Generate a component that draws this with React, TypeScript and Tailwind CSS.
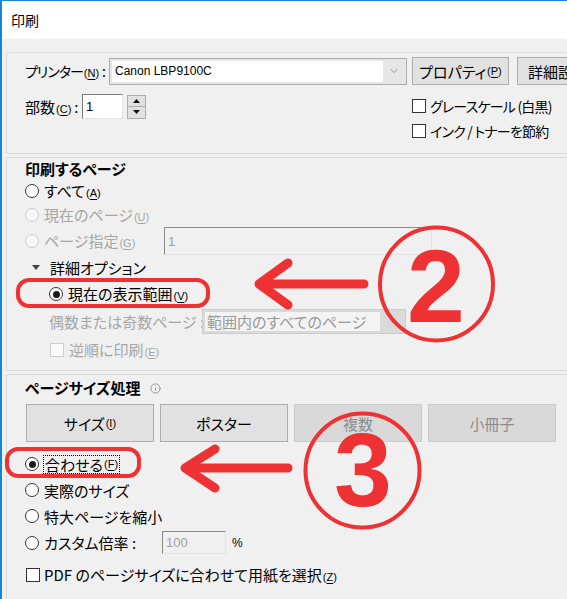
import React from "react";
import { ChevronDown, Info } from "lucide-react";

const RED = "#ee3233";

function Acc({ k }: { k: string }) {
  return (
    <span className="font-['Liberation_Sans',sans-serif] text-[11px] tracking-normal ml-[1px]">
      (<span className="underline underline-offset-[2px]">{k}</span>)
    </span>
  );
}

function Radio({ checked, disabled }: { checked?: boolean; disabled?: boolean }) {
  return (
    <span
      className={
        "flex h-[14px] w-[14px] shrink-0 items-center justify-center rounded-full border " +
        (disabled ? "border-[#cccccc] bg-[#f7f7f7]" : "border-[#333333] bg-white")
      }
    >
      {checked && <span className="h-[7px] w-[7px] rounded-full bg-[#1a1a1a]" />}
    </span>
  );
}

function Check({ disabled }: { disabled?: boolean }) {
  return (
    <span
      className={
        "block h-[14px] w-[14px] shrink-0 border " +
        (disabled ? "border-[#cccccc] bg-[#fafafa]" : "border-[#333333] bg-white")
      }
    />
  );
}

function Btn({ children, w, disabled }: { children: React.ReactNode; w: string; disabled?: boolean }) {
  return (
    <div
      className={
        "flex h-full shrink-0 items-center justify-center whitespace-nowrap border " +
        w +
        " " +
        (disabled ? "border-[#cccccc] bg-[#d9d9d9] text-[#8c8c8c]" : "border-[#adadad] bg-[#e1e1e1] text-black")
      }
    >
      {children}
    </div>
  );
}

export default function App() {
  return (
    <div className="relative h-[599px] w-[567px] overflow-hidden">
      <div className="h-[599px] w-[567px] border-l-2 border-t border-[#1883d7] bg-[#f0f0f0] font-['Noto_Sans_CJK_JP',sans-serif] text-[15px] leading-none text-black [font-feature-settings:'palt']">
        {/* title bar */}
        <div className="flex h-[38px] items-center bg-white pl-[9px] text-[14px]">印刷</div>

        <div className="pl-[4px] pt-[13px]">
          {/* Panel 1 */}
          <div className="h-[102px] w-[620px] border border-[#dcdcdc] pl-[18px] pt-[4px]">
            <div className="flex h-[28px] items-center">
              <div className="w-[84px] whitespace-nowrap text-[14px]">
                <span className="tracking-[-1px]">プリンター</span>
                <Acc k="N" />
                <span className="ml-[3px]">:</span>
              </div>
              <div className="flex h-[27px] w-[298px] items-center border border-[#adadad] bg-[#e6e6e6] px-[2px]">
                <div className="flex h-[21px] w-[271px] items-center bg-white pl-[3px] font-['Liberation_Sans',sans-serif] text-[12px]">
                  Canon LBP9100C
                </div>
                <div className="flex flex-1 justify-center">
                  <ChevronDown size={12} strokeWidth={1.2} color="#606060" />
                </div>
              </div>
              <div className="ml-[5px] h-[28px]">
                <Btn w="w-[97px]">
                  プロパティ<Acc k="P" />
                </Btn>
              </div>
              <div className="ml-[8px] h-[28px]">
                <Btn w="w-[82px]">詳細設定</Btn>
              </div>
            </div>
            <div className="mt-[9px] flex items-start">
              <div className="flex h-[25px] items-center">
                <div className="w-[57px] whitespace-nowrap">
                  部数<Acc k="C" />
                  <span className="ml-[3px]">:</span>
                </div>
                <div className="flex h-[25px] w-[41px] items-center border border-b-[#e3e3e3] border-l-[#7a7a7a] border-r-[#e3e3e3] border-t-[#7a7a7a] bg-white pl-[3px] font-['Liberation_Sans',sans-serif] text-[13px]">
                  1
                </div>
                <div className="ml-[4px] flex h-[24px] w-[19px] flex-col">
                  <div className="flex h-[12px] items-center justify-center border border-[#adadad] bg-[#e1e1e1]">
                    <svg width="7" height="4" viewBox="0 0 7 4">
                      <polygon points="3.5,0 7,4 0,4" fill="#111" />
                    </svg>
                  </div>
                  <div className="flex h-[12px] items-center justify-center border border-t-0 border-[#adadad] bg-[#e1e1e1]">
                    <svg width="7" height="4" viewBox="0 0 7 4">
                      <polygon points="0,0 7,0 3.5,4" fill="#111" />
                    </svg>
                  </div>
                </div>
              </div>
              <div className="ml-[266px] mt-[4px] flex flex-col gap-[9px] text-[14px] tracking-[-0.8px]">
                <div className="flex h-[16px] items-center gap-[4px] whitespace-nowrap">
                  <Check />
                  グレースケール (白黒)
                </div>
                <div className="flex h-[16px] items-center gap-[4px] whitespace-nowrap">
                  <Check />
                  インク / トナーを節約
                </div>
              </div>
            </div>
          </div>

          {/* Panel 2 */}
          <div className="mt-[3px] h-[214px] w-[620px] border border-[#dcdcdc] pl-[18px]">
            <div className="flex h-[20px] items-center font-bold">印刷するページ</div>
            <div className="mt-[3px] flex h-[20px] items-center gap-[5px]">
              <Radio />
              <span>
                すべて<Acc k="A" />
              </span>
            </div>
            <div className="mt-[4px] flex h-[20px] items-center gap-[5px] text-[#a6a6a6]">
              <Radio disabled />
              <span>
                現在のページ<Acc k="U" />
              </span>
            </div>
            <div className="mt-[2px] flex h-[28px] items-center">
              <div className="flex w-[139px] items-center gap-[5px] text-[#a6a6a6]">
                <Radio disabled />
                <span>
                  ページ指定<Acc k="G" />
                </span>
              </div>
              <div className="flex h-[28px] w-[268px] items-center border border-b-[#e3e3e3] border-l-[#8a8a8a] border-r-[#e3e3e3] border-t-[#8a8a8a] bg-[#f0f0f0] pl-[3px] font-['Liberation_Sans',sans-serif] text-[13px] text-[#a0a0a0]">
                1
              </div>
            </div>
            <div className="mt-[2px] flex h-[20px] items-center pl-[7px]">
              <svg width="8" height="5" viewBox="0 0 8 5">
                <polygon points="0,0 8,0 4,5" fill="#444" />
              </svg>
              <span className="ml-[10px]">詳細オプション</span>
            </div>
            <div className="mt-[7px] flex h-[20px] items-center gap-[5px] pl-[24px]">
              <Radio checked />
              <span>
                現在の表示範囲<Acc k="V" />
              </span>
            </div>
            <div className="mt-[5px] flex h-[25px] items-center pl-[24px]">
              <div className="w-[153px] whitespace-nowrap text-[#a6a6a6]">偶数または奇数ページ :</div>
              <div className="flex h-[25px] w-[204px] items-center border border-[#cccccc] bg-[#dadada] px-[2px]">
                <div className="flex h-[19px] w-[175px] items-center bg-[#f3f3f3] pl-[2px] text-[#999999]">
                  範囲内のすべてのページ
                </div>
                <div className="flex flex-1 justify-center">
                  <ChevronDown size={10} strokeWidth={1.2} color="#b0b0b0" />
                </div>
              </div>
            </div>
            <div className="mt-[6px] flex h-[20px] items-center gap-[5px] pl-[25px] text-[#a6a6a6]">
              <Check disabled />
              <span>
                逆順に印刷<Acc k="E" />
              </span>
            </div>
          </div>

          {/* Panel 3 */}
          <div className="mt-[3px] h-[240px] w-[620px] border border-[#dcdcdc] pl-[18px]">
            <div className="mt-[2px] flex h-[20px] items-center">
              <span className="font-bold">ページサイズ処理</span>
              <span className="ml-[10px] mt-[3px]">
                <Info size={11} strokeWidth={1.6} color="#7a7a7a" />
              </span>
            </div>
            <div className="ml-[1px] mt-[7px] flex h-[38px] gap-[6px]">
              <Btn w="w-[128px]">
                サイズ<Acc k="I" />
              </Btn>
              <Btn w="w-[128px]">ポスター</Btn>
              <Btn w="w-[128px]" disabled>
                複数
              </Btn>
              <Btn w="w-[128px]" disabled>
                小冊子
              </Btn>
            </div>
            <div className="mt-[12px] flex h-[20px] items-center gap-[4px]">
              <Radio checked />
              <span className="flex h-[19px] items-center border border-dotted border-black px-[1px]">
                合わせる<Acc k="F" />
              </span>
            </div>
            <div className="mt-[6px] flex h-[20px] items-center gap-[5px]">
              <Radio />
              <span>実際のサイズ</span>
            </div>
            <div className="mt-[6px] flex h-[20px] items-center gap-[5px]">
              <Radio />
              <span>特大ページを縮小</span>
            </div>
            <div className="mt-[5px] flex h-[23px] items-center">
              <div className="flex w-[137px] items-center gap-[5px]">
                <Radio />
                <span>カスタム倍率 :</span>
              </div>
              <div className="flex h-[23px] w-[64px] items-center border border-b-[#e3e3e3] border-l-[#8a8a8a] border-r-[#e3e3e3] border-t-[#8a8a8a] bg-[#f0f0f0] pl-[3px] font-['Liberation_Sans',sans-serif] text-[13px] text-[#a0a0a0]">
                100
              </div>
              <span className="ml-[6px] font-['Liberation_Sans',sans-serif] text-[12px]">%</span>
            </div>
            <div className="ml-[1px] mt-[11px] flex h-[20px] items-center gap-[4px] whitespace-nowrap">
              <Check />
              <span>
                PDF のページサイズに合わせて用紙を選択<Acc k="Z" />
              </span>
            </div>
          </div>
        </div>
      </div>

      {/* annotations */}
      <svg width="567" height="599" viewBox="0 0 567 599" className="pointer-events-none absolute left-0 top-0">
        <rect x="18" y="280" width="190" height="26" rx="11" fill="none" stroke={RED} strokeWidth="4" />
        <rect x="7" y="449" width="132" height="27" rx="11" fill="none" stroke={RED} strokeWidth="4" />
        <g stroke={RED} strokeWidth="9" strokeLinecap="round" strokeLinejoin="round" fill="none">
          <path d="M260 284 H364 M288 263 L259 284 L288 305" />
          <path d="M187 468 H288 M215 449 L185 468 L215 488" />
        </g>
        <circle cx="436.5" cy="284" r="56.5" fill="none" stroke={RED} strokeWidth="4" />
        <circle cx="362.5" cy="470.5" r="57" fill="none" stroke={RED} strokeWidth="4" />
        <text
          x="436"
          y="322"
          textAnchor="middle"
          fontFamily="Liberation Sans, Arial, sans-serif"
          fontWeight="700"
          fontSize="104"
          fill={RED}
        >
          2
        </text>
        <text
          x="363"
          y="506"
          textAnchor="middle"
          fontFamily="Liberation Sans, Arial, sans-serif"
          fontWeight="700"
          fontSize="104"
          fill={RED}
        >
          3
        </text>
      </svg>
    </div>
  );
}
